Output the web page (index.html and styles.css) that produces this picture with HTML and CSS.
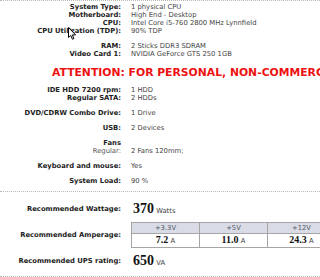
FILE: index.html
```html
<!DOCTYPE html>
<html>
<head>
<meta charset="utf-8">
<link rel="stylesheet" href="styles.css">
</head>
<body>
<div class="page">
  <section class="specs">
    <div class="grp">
      <span class="k">System Type:</span><span class="v">1 physical CPU</span>
      <span class="k">Motherboard:</span><span class="v">High End - Desktop</span>
      <span class="k">CPU:</span><span class="v">Intel Core i5-760 2800 MHz Lynnfield</span>
      <span class="k">CPU Utilization (TDP):</span><span class="v">90% TDP</span>
    </div>
    <div class="grp">
      <span class="k">RAM:</span><span class="v">2 Sticks DDR3 SDRAM</span>
      <span class="k">Video Card 1:</span><span class="v">NVIDIA GeForce GTS 250 1GB</span>
    </div>
    <div class="attn">ATTENTION: FOR PERSONAL, NON-COMMERCIAL USE ONLY</div>
    <div class="grp">
      <span class="k">IDE HDD 7200 rpm:</span><span class="v">1 HDD</span>
      <span class="k">Regular SATA:</span><span class="v">2 HDDs</span>
    </div>
    <div class="grp">
      <span class="k">DVD/CDRW Combo Drive:</span><span class="v">1 Drive</span>
    </div>
    <div class="grp">
      <span class="k">USB:</span><span class="v">2 Devices</span>
    </div>
    <div class="grp">
      <span class="k">Fans</span><span class="v"></span>
      <span class="k sub">Regular:</span><span class="v">2 Fans 120mm;</span>
    </div>
    <div class="grp">
      <span class="k">Keyboard and mouse:</span><span class="v">Yes</span>
    </div>
    <div class="grp">
      <span class="k">System Load:</span><span class="v">90 %</span>
    </div>
  </section>
  <section class="rec">
    <div class="rrow">
      <span class="k">Recommended Wattage:</span>
      <span class="v"><b class="big">370</b> Watts</span>
    </div>
    <div class="rrow">
      <span class="k">Recommended Amperage:</span>
      <table class="amp">
        <tr><th>+3.3V</th><th>+5V</th><th>+12V</th></tr>
        <tr><td><b>7.2</b> A</td><td><b>11.0</b> A</td><td><b>24.3</b> A</td></tr>
      </table>
    </div>
    <div class="rrow">
      <span class="k">Recommended UPS rating:</span>
      <span class="v"><b class="big">650</b> VA</span>
    </div>
  </section>
  <svg class="cursor" width="9" height="13" viewBox="0 0 9 13"><path d="M0.5 0.5 L0.5 10.5 L2.8 8.4 L4.4 12.2 L5.9 11.6 L4.4 7.9 L7.6 7.9 Z" fill="#fff" stroke="#000" stroke-width="1"/></svg>
</div>
</body>
</html>
```
FILE: styles.css
```css
html, body {
  margin: 0;
  padding: 0;
  background: #fff;
}
body {
  width: 320px;
  height: 277px;
  overflow: hidden;
  font-family: "DejaVu Sans", Verdana, sans-serif;
  font-size: 6.8px;
  color: #444;
}
.page {
  position: relative;
  width: 320px;
}
.specs {
  border-top: 1px dotted #b8b8b8;
  border-bottom: 1px dotted #b8b8b8;
  padding: 2px 0 6px;
  display: flex;
  flex-direction: column;
  gap: 7px;
}
.grp {
  display: grid;
  grid-template-columns: 121px 1fr;
  column-gap: 10px;
  line-height: 8px;
}
.k {
  text-align: right;
  font-weight: bold;
  color: #222;
  white-space: nowrap;
}
.k.sub {
  font-weight: normal;
  color: #555;
}
.v {
  white-space: nowrap;
  color: #444;
}
.attn {
  margin-top: 1px;
  padding-left: 52px;
  white-space: nowrap;
  font-weight: bold;
  font-size: 10.8px;
  line-height: 13px;
  color: #ee1111;
}
.rec {
  padding: 9px 0 7px;
  border-bottom: 1px dotted #b8b8b8;
  display: flex;
  flex-direction: column;
  gap: 5px;
}
.rrow {
  display: grid;
  grid-template-columns: 121px 1fr;
  column-gap: 10px;
  align-items: center;
  min-height: 16px;
}
.big {
  font-family: "Liberation Serif", "Times New Roman", serif;
  font-size: 14px;
  font-weight: bold;
  color: #111;
  margin-left: 2px;
}
.amp {
  border-collapse: collapse;
  width: 201px;
  table-layout: fixed;
}
.amp th {
  width: 67px;
  height: 10px;
  padding: 0;
  background: #d9dce6;
  border: 1px solid #a5a5a5;
  font-weight: normal;
  color: #555a66;
  text-align: center;
  line-height: 9px;
}
.amp td {
  height: 11px;
  padding: 0;
  border: 1px solid #a5a5a5;
  text-align: center;
  color: #444;
  line-height: 11px;
}
.amp td b {
  font-family: "Liberation Serif", "Times New Roman", serif;
  font-size: 10px;
  color: #111;
}
.cursor {
  position: absolute;
  left: 68px;
  top: 27px;
}
```
